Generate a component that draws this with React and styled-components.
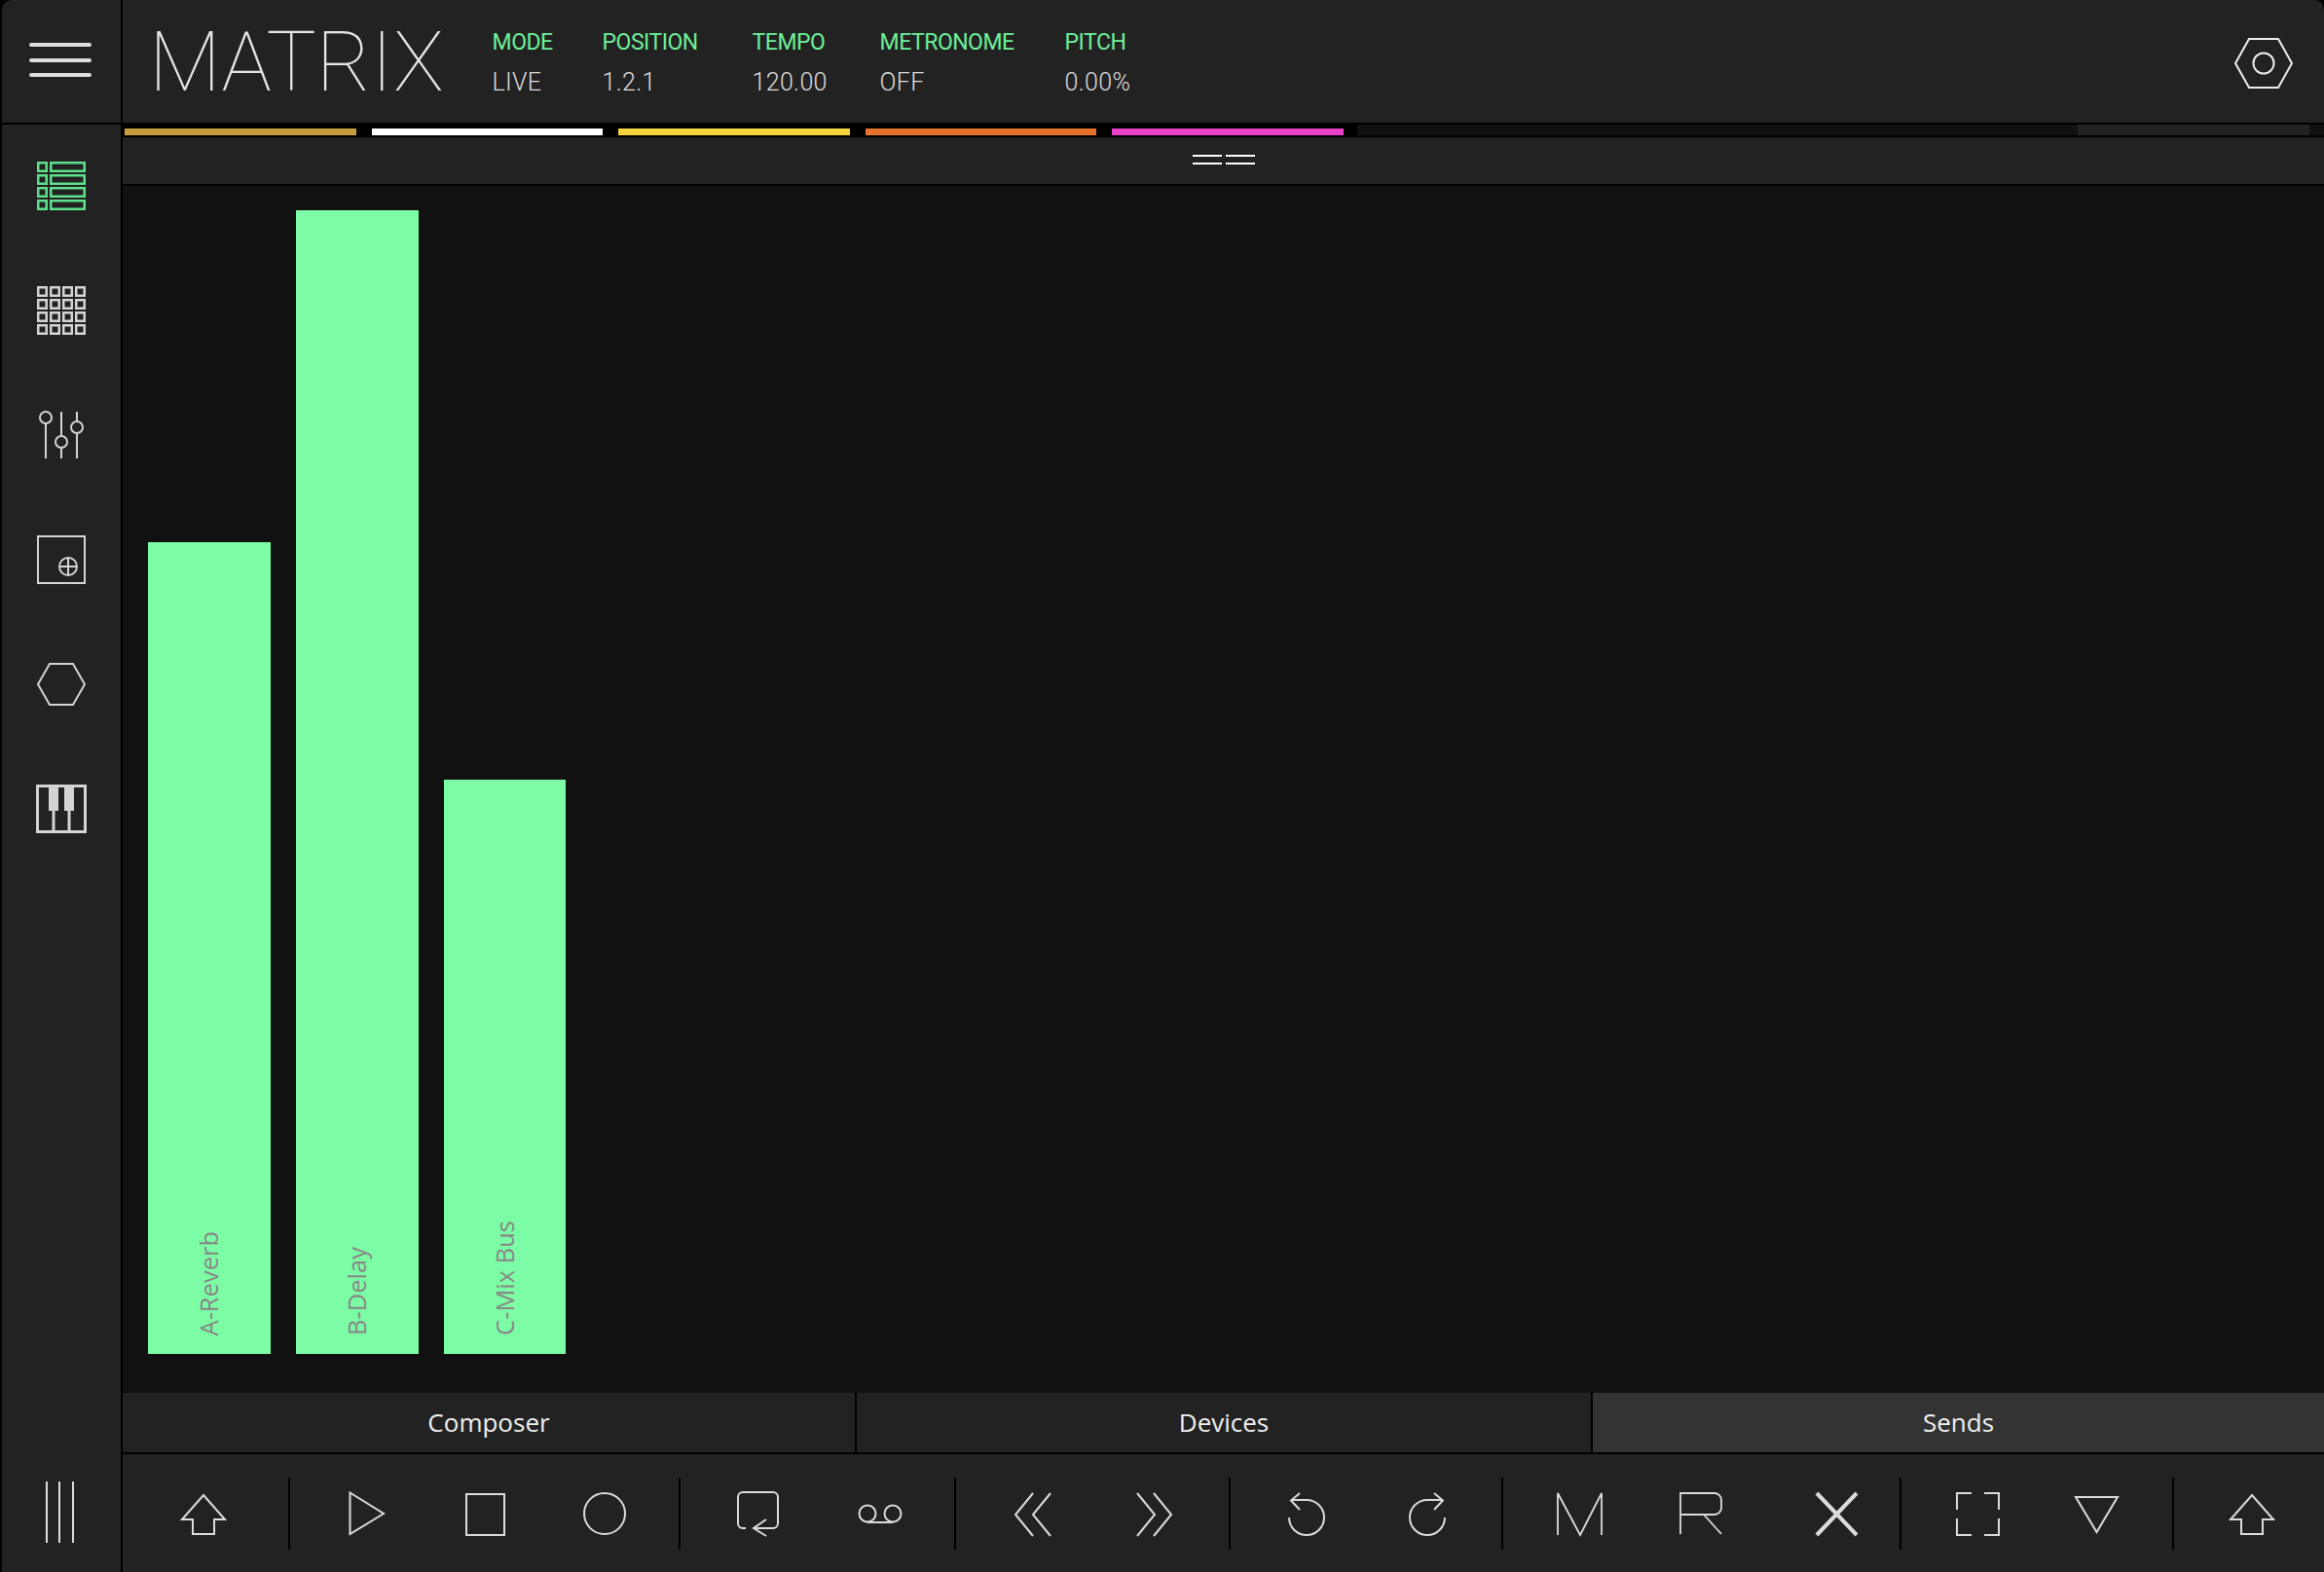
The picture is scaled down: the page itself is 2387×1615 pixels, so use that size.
import React from "react";
import styled, { createGlobalStyle } from "styled-components";

const GlobalStyle = createGlobalStyle`
  html, body {
    margin: 0;
    padding: 0;
    background: #000;
  }
  * {
    box-sizing: border-box;
  }
`;

const Shell = styled.div`
  width: 2387px;
  height: 1615px;
  display: grid;
  grid-template-columns: 126px 1fr;
  grid-template-rows: 128px 1fr;
  background: #000;
  overflow: hidden;
`;

const MenuCell = styled.div`
  background: #222;
  margin-left: 2px;
  border-right: 2px solid #000;
  border-bottom: 2px solid #000;
  border-top-left-radius: 10px;
  display: flex;
  align-items: center;
  justify-content: center;
  padding: 0 3px 2px 0;
`;

const Header = styled.header`
  background: #222;
  border-bottom: 2px solid #000;
  border-top-right-radius: 10px;
  display: flex;
  align-items: flex-start;
  padding: 0 0 0 27px;
  position: relative;
`;

const Logo = styled.div`
  font-family: "Roboto", sans-serif;
  font-weight: 100;
  font-size: 86px;
  line-height: 126px;
  color: #e6e6e6;
  margin-right: 50px;
  margin-top: 1px;
`;

const Stats = styled.div`
  display: flex;
  padding-top: 30px;
  flex: 1;
`;

const Stat = styled.div`
  width: ${({ $w }) => $w}px;
  display: flex;
  flex-direction: column;
  gap: 14px;
  font-family: "Roboto", sans-serif;
`;

const StatLabel = styled.div`
  font-size: 23px;
  line-height: 27px;
  color: #6ef09a;
  letter-spacing: -0.5px;
`;

const StatValue = styled.div`
  font-size: 25px;
  line-height: 28px;
  font-weight: 300;
  letter-spacing: 0.3px;
  color: #ddd;
`;

const Settings = styled.div`
  position: absolute;
  top: 38px;
  right: 31px;
  width: 62px;
  height: 54px;
`;

const Sidebar = styled.nav`
  background: #222;
  margin-left: 2px;
  border-right: 2px solid #000;
  display: flex;
  flex-direction: column;
  align-items: center;
  gap: 78px;
  padding-top: 38px;
`;

const SideIcon = styled.div`
  width: 54px;
  height: 50px;
  display: flex;
  align-items: center;
  justify-content: center;
  color: ${({ $active }) => ($active ? "#5fe08d" : "#d4d4d4")};
`;

const SideFoot = styled.div`
  margin-top: auto;
  margin-bottom: 30px;
  margin-right: 4px;
  width: 29px;
  height: 63px;
  display: flex;
  justify-content: space-between;
`;

const FootLine = styled.span`
  width: 2px;
  background: #ddd;
`;

const Content = styled.div`
  display: flex;
  flex-direction: column;
  min-width: 0;
  min-height: 0;
`;

const TrackStrip = styled.div`
  height: 11px;
  background: #111;
  display: flex;
  margin-bottom: 2px;
`;

const TrackCell = styled.div`
  width: 253.6px;
  flex: none;
  background: #000;
  padding: 4px 14px 0 2px;
`;

const TrackBar = styled.div`
  height: 7px;
  background: ${({ $color }) => $color};
`;

const StripFill = styled.div`
  width: 740px;
  flex: none;
`;

const StripEnd = styled.div`
  width: 238px;
  flex: none;
  background: #222;
`;

const Handle = styled.div`
  height: 50px;
  background: #222;
  border-bottom: 2px solid #000;
  display: flex;
  justify-content: center;
  gap: 4px;
  padding-top: 18px;
`;

const HandleBar = styled.span`
  width: 30px;
  height: 10px;
  border-top: 2px solid #fff;
  border-bottom: 2px solid #fff;
`;

const Stage = styled.main`
  flex: 1;
  min-height: 0;
  background: #111;
  display: flex;
  align-items: flex-end;
  gap: 26px;
  padding: 0 0 40px 26px;
`;

const Send = styled.div`
  background: #7cfca4;
  display: flex;
  justify-content: center;
  align-items: flex-end;
  padding-bottom: 19px;
`;

const SendLabel = styled.span`
  writing-mode: vertical-rl;
  transform: rotate(180deg);
  font-family: "Open Sans", sans-serif;
  font-size: 25.5px;
  line-height: 26px;
  margin-right: 2px;
  color: #888;
`;

const Tabs = styled.div`
  height: 63px;
  flex: none;
  display: grid;
  grid-template-columns: 754px 756px 1fr;
  background: #222;
  border-bottom: 2px solid #000;
`;

const Tab = styled.div`
  display: flex;
  align-items: center;
  justify-content: center;
  padding-bottom: 2px;
  font-family: "Open Sans", sans-serif;
  font-size: 26px;
  color: #f0f0f0;
  background: ${({ $active }) => ($active ? "#333" : "#222")};
  border-right: ${({ $last }) => ($last ? "none" : "2px solid #000")};
`;

const Toolbar = styled.div`
  height: 121px;
  flex: none;
  background: #222;
  display: flex;
  align-items: center;
`;

const ToolGroup = styled.div`
  width: ${({ $w }) => $w}px;
  flex: none;
  display: flex;
  align-items: center;
`;

const ToolDivider = styled.span`
  width: 2px;
  height: 74px;
  background: #000;
  flex: none;
`;

const ToolIcon = styled.svg`
  display: block;
  flex: none;
  height: 47px;
  width: ${({ $w }) => $w}px;
  margin-left: ${({ $ml }) => $ml}px;
  fill: none;
  stroke: #dcdcdc;
  stroke-width: ${({ $sw }) => $sw || 2};
  overflow: visible;
`;

const tracks = ["#c69c3d", "#ffffff", "#f5d33f", "#e5732b", "#ea3fc8"];

const sends = [
  { name: "A-Reverb", h: 834, w: 126 },
  { name: "B-Delay", h: 1175, w: 126 },
  { name: "C-Mix Bus", h: 590, w: 125 },
];

const stats = [
  ["MODE", "LIVE", 113],
  ["POSITION", "1.2.1", 154],
  ["TEMPO", "120.00", 131],
  ["METRONOME", "OFF", 190],
  ["PITCH", "0.00%", 100],
];

const upArrow = "M23 5L45 30H34V45H12V30H1Z";

const Tool = ({ w, ml, sw, children }) => (
  <ToolIcon
    $w={w}
    $ml={ml}
    $sw={sw}
    viewBox={`0 0 ${w} 47`}
    xmlns="http://www.w3.org/2000/svg"
  >
    {children}
  </ToolIcon>
);

const ListIcon = () => (
  <svg width="50" height="50" viewBox="0 0 50 50" fill="none" stroke="currentColor" strokeWidth="2.5">
    {[0, 13, 26, 39].map((y) => (
      <g key={y}>
        <rect x="1.25" y={y + 1.25} width="8.5" height="8.5" />
        <rect x="14.25" y={y + 1.25} width="34.5" height="8.5" />
      </g>
    ))}
  </svg>
);

const GridIcon = () => (
  <svg width="50" height="50" viewBox="0 0 50 50" fill="none" stroke="currentColor" strokeWidth="2.5">
    {[0, 13, 26, 39].map((y) =>
      [0, 13, 26, 39].map((x) => (
        <rect key={`${x}-${y}`} x={x + 1.25} y={y + 1.25} width="8.5" height="8.5" />
      ))
    )}
  </svg>
);

const MixerIcon = () => (
  <svg width="50" height="50" viewBox="0 0 50 50" fill="none" stroke="currentColor" strokeWidth="2">
    <path d="M9 13V49M25 1V27M25 38V49M41 1V11M41 23V49" />
    <circle cx="9" cy="7" r="6" />
    <circle cx="25" cy="32" r="6" />
    <circle cx="41" cy="17" r="6" />
  </svg>
);

const ClipIcon = () => (
  <svg width="50" height="50" viewBox="0 0 50 50" fill="none" stroke="currentColor" strokeWidth="2">
    <rect x="1" y="1" width="48" height="48" />
    <circle cx="32" cy="32" r="9" />
    <path d="M32 23V41M23 32H41" />
  </svg>
);

const HexIcon = () => (
  <svg width="50" height="44" viewBox="0 0 50 44" fill="none" stroke="currentColor" strokeWidth="2">
    <path d="M13 1H37L49 22L37 43H13L1 22Z" />
  </svg>
);

const PianoIcon = () => (
  <svg width="52" height="50" viewBox="0 0 52 50" fill="none" stroke="currentColor" strokeWidth="3">
    <rect x="1.5" y="1.5" width="49" height="47" />
    <path d="M18 26V49M34 26V49" />
    <rect x="13" y="2" width="10" height="25" fill="currentColor" stroke="none" />
    <rect x="29" y="2" width="10" height="25" fill="currentColor" stroke="none" />
  </svg>
);

const App = () => (
  <>
    <GlobalStyle />
    <Shell>
      <MenuCell>
        <svg width="64" height="40" viewBox="0 0 64 40" fill="none" stroke="#ddd" strokeWidth="4" strokeLinecap="round">
          <path d="M2 4H62M2 20H62M2 35H62" />
        </svg>
      </MenuCell>
      <Header>
        <Logo>MATRIX</Logo>
        <Stats>
          {stats.map(([label, value, width]) => (
            <Stat key={label} $w={width}>
              <StatLabel>{label}</StatLabel>
              <StatValue>{value}</StatValue>
            </Stat>
          ))}
        </Stats>
        <Settings>
          <svg width="62" height="54" viewBox="0 0 62 54" fill="none" stroke="#eee" strokeWidth="2">
            <path d="M16 2H46L60 27L46 52H16L2 27Z" />
            <circle cx="31" cy="27" r="10.5" />
          </svg>
        </Settings>
      </Header>
      <Sidebar>
        <SideIcon $active><ListIcon /></SideIcon>
        <SideIcon><GridIcon /></SideIcon>
        <SideIcon><MixerIcon /></SideIcon>
        <SideIcon><ClipIcon /></SideIcon>
        <SideIcon><HexIcon /></SideIcon>
        <SideIcon><PianoIcon /></SideIcon>
        <SideFoot>
          <FootLine />
          <FootLine />
          <FootLine />
        </SideFoot>
      </Sidebar>
      <Content>
        <TrackStrip>
          {tracks.map((color) => (
            <TrackCell key={color}>
              <TrackBar $color={color} />
            </TrackCell>
          ))}
          <StripFill />
          <StripEnd />
        </TrackStrip>
        <Handle>
          <HandleBar />
          <HandleBar />
        </Handle>
        <Stage>
          {sends.map((send) => (
            <Send key={send.name} style={{ height: send.h, width: send.w }}>
              <SendLabel>{send.name}</SendLabel>
            </Send>
          ))}
        </Stage>
        <Tabs>
          <Tab>Composer</Tab>
          <Tab>Devices</Tab>
          <Tab $active $last>Sends</Tab>
        </Tabs>
        <Toolbar>
          <ToolGroup $w={170}>
            <Tool w={46} ml={60}><path d={upArrow} /></Tool>
          </ToolGroup>
          <ToolDivider />
          <ToolGroup $w={399}>
            <Tool w={37} ml={60}><path d="M1.5 2.5L36 24L1.5 45Z" /></Tool>
            <Tool w={41} ml={83}><rect x="1" y="4" width="39" height="42" /></Tool>
            <Tool w={44} ml={80}><circle cx="22" cy="24" r="21" /></Tool>
          </ToolGroup>
          <ToolDivider />
          <ToolGroup $w={281}>
            <Tool w={43} ml={58}>
              <path d="M9 39H6A5 5 0 0 1 1 34V7A5 5 0 0 1 6 2H37A5 5 0 0 1 42 7V34A5 5 0 0 1 37 39H17" />
              <path d="M30 30L17 39L30 47" />
            </Tool>
            <Tool w={44} ml={82}>
              <circle cx="9" cy="24" r="8.5" />
              <circle cx="35" cy="24" r="8.5" />
              <path d="M9 33H35" />
            </Tool>
          </ToolGroup>
          <ToolDivider />
          <ToolGroup $w={280}>
            <Tool w={37} ml={60}><path d="M19 3L1 25L19 47M37 3L19 25L37 47" /></Tool>
            <Tool w={36} ml={89}><path d="M0 3L18 25L0 47M17 3L35 25L17 47" /></Tool>
          </ToolGroup>
          <ToolDivider />
          <ToolGroup $w={278}>
            <Tool w={35} ml={61}>
              <path d="M-1 28A18 18 0 1 0 17 10H1" />
              <path d="M10 3L1 10.5L10 20" />
            </Tool>
            <Tool w={36} ml={88}>
              <path d="M36 28A18 18 0 1 1 18 10H34" />
              <path d="M25 3L34 10.5L25 20" />
            </Tool>
          </ToolGroup>
          <ToolDivider />
          <ToolGroup $w={407}>
            <Tool w={47} ml={55} sw={1.8}><path d="M1 46V3L24 46L46 3V46" /></Tool>
            <Tool w={44} ml={79} sw={1.8}>
              <path d="M1 45V3H36A7 7 0 0 1 43 10V18A7 7 0 0 1 36 25H1M25 25L43 45" />
            </Tool>
            <Tool w={45} ml={95} sw={4}><path d="M2 3L43 46M43 3L2 46" /></Tool>
          </ToolGroup>
          <ToolDivider />
          <ToolGroup $w={278}>
            <Tool w={45} ml={56}>
              <path d="M16 3H1V20M29 3H44V20M1 29V46H16M44 29V46H29" />
            </Tool>
            <Tool w={45} ml={77}><path d="M1 7H44L22.5 43Z" /></Tool>
          </ToolGroup>
          <ToolDivider />
          <ToolGroup $w={154}>
            <Tool w={46} ml={57}><path d={upArrow} /></Tool>
          </ToolGroup>
        </Toolbar>
      </Content>
    </Shell>
  </>
);

export default App;
